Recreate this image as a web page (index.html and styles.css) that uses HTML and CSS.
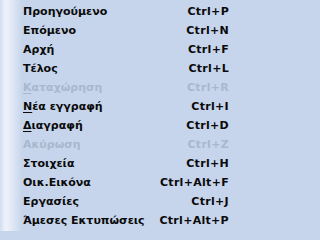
FILE: index.html
```html
<!DOCTYPE html>
<html lang="el">
<head>
<meta charset="utf-8">
<link rel="stylesheet" href="styles.css">
</head>
<body>
<ul class="menu">
  <li class="item"><span class="label">Προηγούμενο</span><span class="key">Ctrl+P</span></li>
  <li class="item"><span class="label">Επόμενο</span><span class="key">Ctrl+N</span></li>
  <li class="item"><span class="label">Αρχή</span><span class="key">Ctrl+F</span></li>
  <li class="item"><span class="label">Τέλος</span><span class="key">Ctrl+L</span></li>
  <li class="item disabled"><span class="label"><u>Κ</u>αταχώρηση</span><span class="key">Ctrl+R</span></li>
  <li class="item"><span class="label"><u>Ν</u>έα εγγραφή</span><span class="key">Ctrl+I</span></li>
  <li class="item"><span class="label"><u>Δ</u>ιαγραφή</span><span class="key">Ctrl+D</span></li>
  <li class="item disabled"><span class="label">Ακύρωση</span><span class="key">Ctrl+Z</span></li>
  <li class="item"><span class="label">Στοιχεία</span><span class="key">Ctrl+H</span></li>
  <li class="item"><span class="label">Οικ.Εικόνα</span><span class="key">Ctrl+Alt+F</span></li>
  <li class="item"><span class="label">Εργασίες</span><span class="key">Ctrl+J</span></li>
  <li class="item"><span class="label">Άμεσες Εκτυπώσεις</span><span class="key">Ctrl+Alt+P</span></li>
</ul>
</body>
</html>
```
FILE: styles.css
```css
html, body {
  margin: 0;
  padding: 0;
  background: #c6d5ec;
}
.menu {
  list-style: none;
  margin: 0;
  padding: 2px 0 0 0;
  width: 240px;
  min-height: 231px;
  box-sizing: border-box;
  background: linear-gradient(to right, #d2ddf1 0px, #edf1f9 5px, #e9eef8 9px, #c6d5ec 22px) no-repeat;
  background-color: #c6d5ec;
  font-family: "DejaVu Sans", Tahoma, sans-serif;
  font-weight: bold;
  font-size: 11px;
  color: #0a0a0a;
}
.item {
  display: flex;
  align-items: center;
  justify-content: space-between;
  height: 19px;
  padding: 0 11px 0 23px;
}
.key {
  text-align: right;
  letter-spacing: 0.3px;
}
.disabled {
  color: #aab7cd;
}
u {
  text-decoration-thickness: 1px;
  text-underline-offset: 2px;
}
```
